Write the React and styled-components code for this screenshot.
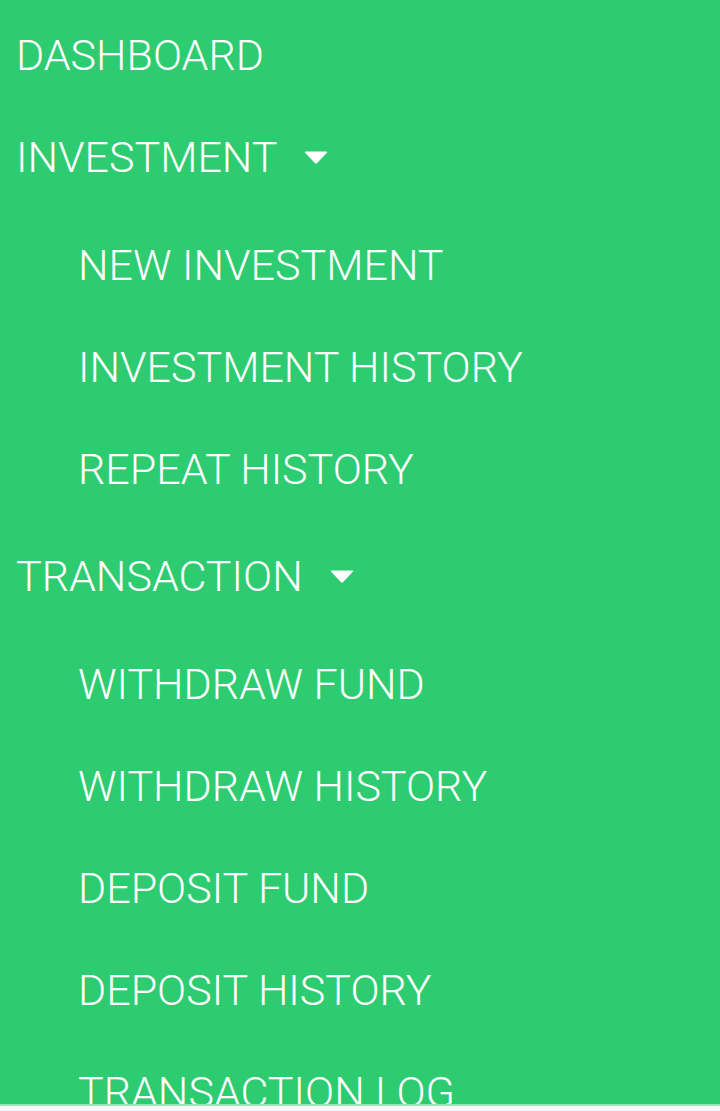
import React from "react";
import styled, { createGlobalStyle } from "styled-components";

const Global = createGlobalStyle`
  html, body { margin: 0; padding: 0; background: #f7f7f7; }
  body { font-family: Roboto, "Noto Sans", sans-serif; }
  * { box-sizing: border-box; }
`;

const Nav = styled.nav`
  height: 1106px;
  background: #2ecc71;
  overflow: hidden;
  border-bottom: 2px solid #9fe3bb;
`;

const Menu = styled.ul`
  list-style: none;
  margin: 0;
  padding: 4px 0 0;
`;

const SubMenu = styled.ul`
  list-style: none;
  margin: 0;
  padding: 6px 0 5px;
`;

const Link = styled.a`
  display: flex;
  align-items: center;
  height: 102px;
  padding-left: ${(p) => (p.$sub ? "78px" : "16px")};
  color: #ffffff;
  font-size: 43px;
  font-weight: 300;
  letter-spacing: 0;
  text-decoration: none;
  white-space: nowrap;
  text-transform: uppercase;
`;

const Caret = styled.svg`
  margin-left: 27px;
  width: 24px;
  height: 13px;
  flex: none;
`;

const CaretIcon = () => (
  <Caret viewBox="0 0 24 13">
    <path d="M1.5 0.5 H22.5 Q24 0.5 23 1.6 L13.2 12 Q12 13.2 10.8 12 L1 1.6 Q0 0.5 1.5 0.5 Z" fill="#fff" />
  </Caret>
);

const groups = [
  { label: "DASHBOARD" },
  { label: "INVESTMENT", items: ["NEW INVESTMENT", "INVESTMENT HISTORY", "REPEAT HISTORY"] },
  {
    label: "TRANSACTION",
    items: ["WITHDRAW FUND", "WITHDRAW HISTORY", "DEPOSIT FUND", "DEPOSIT HISTORY", "TRANSACTION LOG"],
  },
];

export default function App() {
  return (
    <>
      <Global />
      <Nav>
        <Menu>
          {groups.map((g) => (
            <li key={g.label}>
              <Link href="#">
                {g.label}
                {g.items && <CaretIcon />}
              </Link>
              {g.items && (
                <SubMenu>
                  {g.items.map((it) => (
                    <li key={it}>
                      <Link href="#" $sub>
                        {it}
                      </Link>
                    </li>
                  ))}
                </SubMenu>
              )}
            </li>
          ))}
        </Menu>
      </Nav>
    </>
  );
}
